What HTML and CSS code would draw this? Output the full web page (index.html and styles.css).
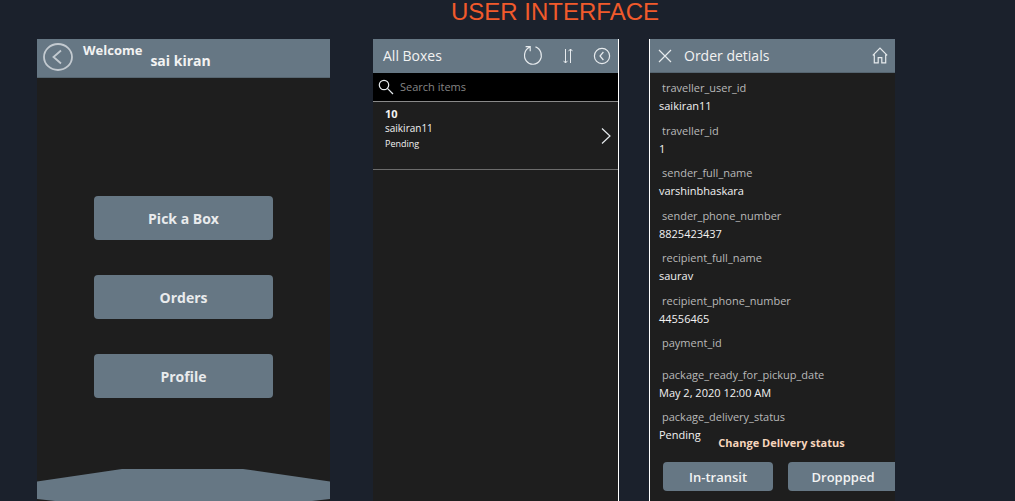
FILE: index.html
```html
<!DOCTYPE html>
<html lang="en">
<head>
<meta charset="utf-8">
<meta name="viewport" content="width=device-width, initial-scale=1">
<title>User Interface</title>
<link rel="stylesheet" href="styles.css">
</head>
<body>
<h1 class="page-title">USER INTERFACE</h1>
<main class="screens">
  <section class="screen home">
    <header class="home-bar">
      <button class="icon-button" aria-label="Back">
        <svg width="30" height="28" viewBox="0 0 30 28"><ellipse cx="15" cy="14" rx="14" ry="13"/><path d="M18 7.5 10.5 14 18 20.5"/></svg>
      </button>
      <p class="greeting"><span class="hello">Welcome</span><span class="user">sai kiran</span></p>
    </header>
    <nav class="home-menu">
      <button class="menu-button">Pick a Box</button>
      <button class="menu-button">Orders</button>
      <button class="menu-button">Profile</button>
    </nav>
    <svg class="home-base" viewBox="0 0 293 31" preserveAspectRatio="none"><path d="M0 12 85 0H206L293 12V29L275 31H18L0 29Z"/></svg>
  </section>

  <section class="screen boxes">
    <header class="bar">
      <h2 class="bar-title">All Boxes</h2>
      <div class="bar-actions">
        <button class="icon-button" aria-label="Refresh">
          <svg width="20" height="22" viewBox="0 0 20 22"><path d="M12.5 1.9A8.4 8.9 0 1 1 6.6 2.2M2.6 1.6 7.2 1.6V6.2"/></svg>
        </button>
        <button class="icon-button" aria-label="Sort">
          <svg width="10" height="18" viewBox="0 0 10 18"><path class="thin" d="M2.5 2V16M.5 13.8 2.5 16 4.5 13.8M7.5 16V2M5.5 4.2 7.5 2 9.5 4.2"/></svg>
        </button>
        <button class="icon-button" aria-label="Back">
          <svg width="18" height="18" viewBox="0 0 18 18"><circle cx="9" cy="9" r="7.6"/><path d="M10.4 5 7 9 10.4 13"/></svg>
        </button>
      </div>
    </header>
    <label class="search">
      <svg width="16" height="16" viewBox="0 0 16 16"><circle cx="6" cy="6" r="4.7"/><path d="M9.4 9.4 15 15"/></svg>
      <input class="search-input" type="text" placeholder="Search items" aria-label="Search items">
    </label>
    <article class="box-item">
      <div class="box-text">
        <strong class="box-id">10</strong>
        <span class="box-user">saikiran11</span>
        <span class="box-status">Pending</span>
      </div>
      <button class="icon-button" aria-label="Open box 10">
        <svg width="10" height="18" viewBox="0 0 10 18"><path d="M1 1.5 9 9 1 16.5"/></svg>
      </button>
    </article>
  </section>

  <section class="screen order">
    <header class="bar order-bar">
      <button class="icon-button" aria-label="Close">
        <svg width="14" height="14" viewBox="0 0 14 14"><path d="M1 1 13 13M13 1 1 13"/></svg>
      </button>
      <h2 class="bar-title">Order detials</h2>
      <button class="icon-button home-link" aria-label="Home">
        <svg width="16" height="17" viewBox="0 0 16 17"><path d="M.8 8.4 8 1.2 15.2 8.4M2.3 7.4V15.9H6.2V10.6H9.8V15.9H13.7V7.4"/></svg>
      </button>
    </header>
    <dl class="fields">
      <div class="field"><dt>traveller_user_id</dt><dd>saikiran11</dd></div>
      <div class="field"><dt>traveller_id</dt><dd>1</dd></div>
      <div class="field"><dt>sender_full_name</dt><dd>varshinbhaskara</dd></div>
      <div class="field"><dt>sender_phone_number</dt><dd>8825423437</dd></div>
      <div class="field"><dt>recipient_full_name</dt><dd>saurav</dd></div>
      <div class="field"><dt>recipient_phone_number</dt><dd>44556465</dd></div>
      <div class="field"><dt>payment_id</dt><dd class="empty"></dd></div>
      <div class="field"><dt>package_ready_for_pickup_date</dt><dd>May 2, 2020 12:00 AM</dd></div>
      <div class="field"><dt>package_delivery_status</dt><dd>Pending</dd></div>
    </dl>
    <footer class="status">
      <h3 class="status-title">Change Delivery status</h3>
      <div class="status-actions">
        <button class="status-button">In-transit</button>
        <button class="status-button">Droppped</button>
      </div>
    </footer>
  </section>
</main>
</body>
</html>
```
FILE: styles.css
```css
* { box-sizing: border-box; }

body {
  margin: 0;
  min-height: 100vh;
  display: flex;
  flex-direction: column;
  background: #1b212c;
  color: #f2f2f2;
  font-family: "Open Sans", "Noto Sans", sans-serif;
}

h1, h2, h3, p, dl, dt, dd { margin: 0; }

button {
  margin: 0;
  padding: 0;
  border: 0;
  background: none;
  color: inherit;
  font: inherit;
  cursor: pointer;
}

svg {
  display: block;
  fill: none;
  stroke: #e6eaed;
  stroke-width: 1.2;
}

.thin { stroke-width: 1; }
.icon-button { flex: none; }

.page-title {
  padding: 0 0 15px 95px;
  color: #f15a2b;
  font: 24px/24px "Liberation Sans", Arial, sans-serif;
  text-align: center;
}

.screens {
  flex: 1;
  display: flex;
  gap: 30px;
  padding: 0 120px 0 37px;
}

.screen {
  flex: 245 1 0;
  min-width: 0;
  display: flex;
  flex-direction: column;
  overflow: hidden;
  background: #1e1e1e;
}

/* Home */
.home { flex-grow: 293; margin-right: 13px; }

.home-bar {
  display: flex;
  align-items: flex-start;
  gap: 10px;
  padding: 4px 6px 6px;
  height: 39px;
  background: #667784;
  border-bottom: 1px solid #566570;
}

.home-bar svg { stroke: #c3cad0; stroke-width: 1.8; }

.greeting {
  display: flex;
  gap: 8px;
  font-weight: 700;
  line-height: 14px;
}

.hello { font-size: 13px; }
.user { padding-top: 11px; font-size: 14px; }

.home-menu {
  flex: 1;
  display: flex;
  flex-direction: column;
  align-items: center;
  gap: 35px;
  padding-top: 118px;
}

.menu-button {
  width: 61%;
  height: 44px;
  border-radius: 4px;
  background: #667784;
  color: #e9ebed;
  font-size: 14px;
  font-weight: 700;
}

.home-base {
  width: 100%;
  height: 32px;
  fill: #667784;
  stroke: none;
}

/* Boxes list */
.boxes {
  border-right: 1px solid #fff;
}

.bar {
  display: flex;
  align-items: center;
  height: 34px;
  padding: 0 7px 0 10px;
  background: #667784;
}

.bar-title {
  font-size: 14px;
  font-weight: 400;
  line-height: 20px;
}

.bar-actions {
  display: flex;
  align-items: center;
  gap: 20px;
  margin-left: auto;
}

.search {
  display: flex;
  align-items: center;
  gap: 4px;
  height: 29px;
  padding: 0 5px;
  background: #000;
  border-bottom: 1px solid #8a8a8a;
}

.search-input {
  flex: 1;
  min-width: 0;
  border: 0;
  outline: 0;
  background: none;
  color: #f2f2f2;
  font: 11px/16px "Open Sans", "Noto Sans", sans-serif;
}

.search-input::placeholder { color: #858585; opacity: 1; }

.box-item {
  display: flex;
  align-items: center;
  justify-content: space-between;
  height: 68px;
  padding: 4px 7px 4px 12px;
  border-bottom: 1px solid #6c6c6c;
}

.box-text {
  align-self: flex-start;
  display: flex;
  flex-direction: column;
  line-height: 15px;
}

.box-id { font-size: 11px; }
.box-user { font-size: 10px; }
.box-status { font-size: 9px; }

/* Order details */
.order {
  border-left: 1px solid #fff;
}

.order-bar { gap: 12px; padding: 0 7px 0 8px; border-bottom: 1px solid #566570; }
.home-link { margin-left: auto; }

.fields {
  flex: 1;
  display: flex;
  flex-direction: column;
  justify-content: space-between;
  padding: 6px 9px 0;
  font-size: 11px;
}

.field dt {
  padding-left: 3px;
  color: #b9b9b9;
  line-height: 18px;
}

.field dd { line-height: 18px; }
.field .empty { height: 7px; }

.status {
  display: flex;
  flex-direction: column;
  gap: 11px;
  margin-top: -9px;
  padding: 0 0 10px 13px;
}

.status-title {
  padding-left: 5px;
  color: #f6d5bd;
  font-size: 11px;
  line-height: 16px;
  text-align: center;
}

.status-actions { display: flex; gap: 15px; }

.status-button {
  flex: 0 0 110px;
  height: 29px;
  border-radius: 4px;
  background: #667784;
  font-size: 13px;
  font-weight: 600;
}
```
